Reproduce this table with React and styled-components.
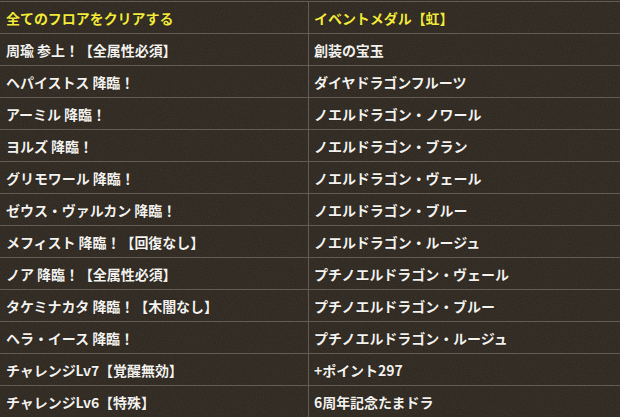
import React from "react";
import styled, { createGlobalStyle } from "styled-components";

const Global = createGlobalStyle`
  html, body { margin: 0; padding: 0; background: #332d25; }
  body { width: 620px; height: 417px; overflow: hidden; }
`;

const Page = styled.div`
  position: relative;
  width: 620px;
  height: 417px;
  overflow: hidden;
  background: #3c352c;
  padding-top: 1px;
  box-sizing: border-box;
`;

const Texture = styled.svg`
  position: absolute;
  inset: 0;
  width: 100%;
  height: 100%;
  pointer-events: none;
`;

const Table = styled.div`
  position: relative;
  display: grid;
  grid-template-columns: 309px 1fr;
  border-top: 1px solid #625c54;
`;

const Cell = styled.div`
  height: 31px;
  display: flex;
  align-items: center;
  box-sizing: content-box;
  border-bottom: 1px solid #625c54;
  border-right: ${(p) => (p.$left ? "1px solid #625c54" : "none")};
  padding-left: ${(p) => (p.$left ? "6px" : "5px")};
  font-family: "Noto Sans CJK JP", "Liberation Sans", sans-serif;
  font-weight: 700;
  font-size: 14px;
  letter-spacing: -0.05px;
  white-space: nowrap;
  color: ${(p) => (p.$head ? "#f3ea3c" : "#f4f2ee")};
  text-shadow: 0 0 1px rgba(0, 0, 0, 0.6);
`;

const rows = [
  ["周瑜 参上！【全属性必須】", "創装の宝玉"],
  ["ヘパイストス 降臨！", "ダイヤドラゴンフルーツ"],
  ["アーミル 降臨！", "ノエルドラゴン・ノワール"],
  ["ヨルズ 降臨！", "ノエルドラゴン・ブラン"],
  ["グリモワール 降臨！", "ノエルドラゴン・ヴェール"],
  ["ゼウス・ヴァルカン 降臨！", "ノエルドラゴン・ブルー"],
  ["メフィスト 降臨！【回復なし】", "ノエルドラゴン・ルージュ"],
  ["ノア 降臨！【全属性必須】", "プチノエルドラゴン・ヴェール"],
  ["タケミナカタ 降臨！【木闇なし】", "プチノエルドラゴン・ブルー"],
  ["ヘラ・イース 降臨！", "プチノエルドラゴン・ルージュ"],
  ["チャレンジLv7【覚醒無効】", "+ポイント297"],
  ["チャレンジLv6【特殊】", "6周年記念たまドラ"],
];

export default function App() {
  return (
    <Page>
      <Global />
      <Texture xmlns="http://www.w3.org/2000/svg">
        <filter id="noise">
          <feTurbulence type="fractalNoise" baseFrequency="0.85" numOctaves="2" seed="3" />
          <feColorMatrix type="matrix" values="0 0 0 0 0  0 0 0 0 0  0 0 0 0 0  0 0 0 0.3 0" />
        </filter>
        <rect width="100%" height="100%" filter="url(#noise)" />
      </Texture>
      <Table>
        <Cell $left $head>全てのフロアをクリアする</Cell>
        <Cell $head>イベントメダル【虹】</Cell>
        {rows.map(([a, b], i) => (
          <React.Fragment key={i}>
            <Cell $left>{a}</Cell>
            <Cell>{b}</Cell>
          </React.Fragment>
        ))}
      </Table>
    </Page>
  );
}
